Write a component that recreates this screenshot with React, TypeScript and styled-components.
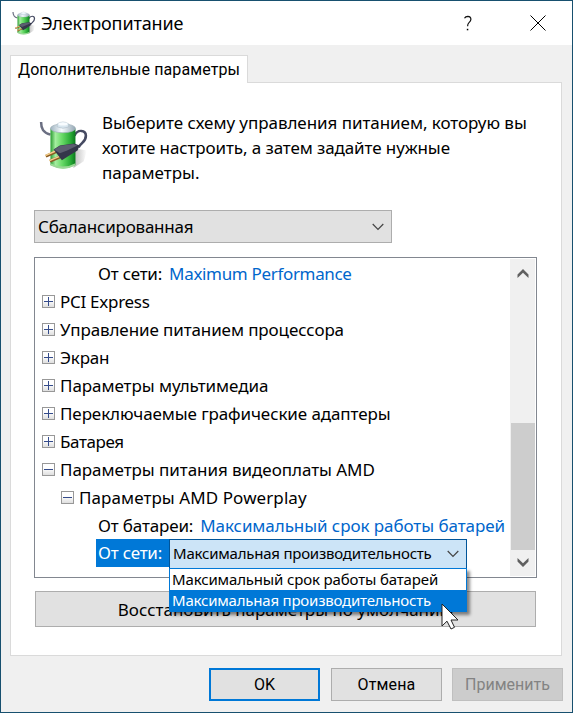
import React from "react";
import styled, { createGlobalStyle, css } from "styled-components";

const GlobalStyle = createGlobalStyle`
  * { box-sizing: border-box; }
  html, body { margin: 0; width: 573px; height: 713px; overflow: hidden; }
  body { font: 17px/25px "Noto Sans", "Open Sans", sans-serif; color: #000; cursor: default; }
  svg { display: block; flex: none; }
`;

/* Letter spacing trims each label to the dialog's text metrics. */
const Label = styled.span<{ $track?: number }>`
  letter-spacing: ${(p) => p.$track ?? 0}px;
  white-space: nowrap;
`;

const Dialog = styled.main`
  width: 573px;
  height: 713px;
  display: flex;
  flex-direction: column;
  background: #f0f0f0;
  border: 1px solid #17506f;
`;

const TitleBar = styled.header`
  height: 44px;
  flex: none;
  display: flex;
  align-items: center;
  background: #fff;
  padding: 0 26px 0 11px;
  font-size: 18px;
`;

const Title = styled.h1`
  flex: 1;
  margin: 0 0 0 5px;
  font: inherit;
  letter-spacing: -0.13px;
`;

const CaptionButtons = styled.div`
  display: flex;
  align-items: center;
  gap: 57px;
`;

const Tabs = styled.nav`
  display: flex;
  height: 28px;
  margin: 10px 0 -1px 9px;
  flex: none;
  z-index: 1;
`;

const Tab = styled.div`
  width: 238px;
  padding: 0 0 0 7px;
  background: #fff;
  border: 1px solid #dadada;
  border-bottom: 0;
  font: 16px/27px Roboto, sans-serif;
`;

const Panel = styled.section`
  margin: 0 10px 0 9px;
  height: 574px;
  flex: none;
  background: #fff;
  border: 1px solid #dadada;
  padding: 27px 24px 0 23px;
  display: flex;
  flex-direction: column;
`;

const Intro = styled.div`
  display: flex;
  gap: 13px;
  height: 75px;
  margin-left: 5px;
  flex: none;
`;

const PlanPicture = styled.div`
  padding-top: 10px;
`;

const IntroText = styled.p`
  display: flex;
  flex-direction: column;
  margin: 0;
`;

const boxed = css`
  background: #e1e1e1;
  border: 1px solid #adadad;
`;

const PlanSelect = styled.div`
  ${boxed}
  width: 358px;
  height: 33px;
  margin-top: 25px;
  padding: 0 7px 0 3px;
  flex: none;
  display: flex;
  align-items: center;
  justify-content: space-between;
`;

const TreeBox = styled.div`
  width: 503px;
  height: 321px;
  margin-top: 14px;
  border: 1px solid #828790;
  display: flex;
  flex: none;
  padding: 1px 1px 1px 0;
`;

const Tree = styled.div`
  flex: 1;
  min-width: 0;
  display: flex;
  flex-direction: column;
`;

const Row = styled.div<{ $indent: number }>`
  height: 28px;
  flex: none;
  display: flex;
  align-items: center;
  padding-left: ${(p) => p.$indent}px;
`;

const RowLabel = styled(Label)`
  margin-left: 5px;
`;

const Setting = styled(Label)`
  margin-left: 7px;
  color: #0066cc;
`;

const SelectedLabel = styled.div`
  width: 73px;
  height: 28px;
  padding-left: 2px;
  line-height: 28px;
  background: #0078d7;
  color: #fff;
`;

const ValueSelect = styled.div`
  position: relative;
  width: 298px;
  height: 30px;
  margin-top: 1px;
  padding: 0 7px 0 3px;
  display: flex;
  align-items: center;
  justify-content: space-between;
  background: #cce4f7;
  border: 1px solid #005499;
  font-size: 15px;
`;

const Dropdown = styled.div`
  position: absolute;
  z-index: 2;
  top: 28px;
  left: -1px;
  width: 298px;
  height: 44px;
  display: flex;
  flex-direction: column;
  background: #fff;
  border: 1px solid #0078d7;
  box-shadow: 3px 3px 3px rgba(0, 0, 0, 0.45);
`;

const Option = styled.div<{ $active?: boolean }>`
  flex: 1;
  padding-left: 2px;
  line-height: 21px;
  background: ${(p) => (p.$active ? "#0078d7" : "#fff")};
  color: ${(p) => (p.$active ? "#fff" : "#000")};
`;

const Pointer = styled.svg`
  position: absolute;
  z-index: 3;
  left: 271px;
  top: 63px;
`;

const ScrollBar = styled.div`
  width: 25px;
  display: flex;
  flex-direction: column;
  align-items: center;
  justify-content: space-between;
  background: #f0f0f0;
  padding: 10px 0 9px;
`;

const Thumb = styled.div`
  width: 24px;
  height: 127px;
  margin-top: auto;
  margin-bottom: 8px;
  background: #cdcdcd;
`;

const RestoreButton = styled.div`
  ${boxed}
  width: 501px;
  height: 36px;
  margin: 13px 0 0 1px;
  flex: none;
  display: flex;
  align-items: center;
  justify-content: center;
`;

const Footer = styled.footer`
  display: flex;
  justify-content: flex-end;
  gap: 11px;
  padding: 12px 9px 0 0;
`;

const FooterButton = styled.button<{ $kind?: "primary" | "disabled" }>`
  ${boxed}
  width: 111px;
  height: 33px;
  padding: 0;
  font: 16px/30px Roboto, sans-serif;
  color: #000;
  ${(p) => p.$kind === "primary" && css`border: 2px solid #0078d7;`}
  ${(p) => p.$kind === "disabled" && css`margin-left: -1px; background: #ccc; border-color: #bfbfbf; color: #838383;`}
`;

function BatteryIcon({ size }: { size: number }) {
  return (
    <svg width={size} height={size} viewBox="0 0 48 51" preserveAspectRatio="none">
      <defs>
        <linearGradient id="cell">
          <stop offset="0" stopColor="#289b30" />
          <stop offset=".2" stopColor="#a5eda0" />
          <stop offset=".45" stopColor="#6bdc69" />
          <stop offset=".8" stopColor="#29ab36" />
          <stop offset="1" stopColor="#0b7a1e" />
        </linearGradient>
        <linearGradient id="cap">
          <stop offset="0" stopColor="#9fb3c0" />
          <stop offset=".45" stopColor="#f7fcff" />
          <stop offset="1" stopColor="#93a6b3" />
        </linearGradient>
        <linearGradient id="shade">
          <stop offset="0" stopColor="#666" stopOpacity=".45" />
          <stop offset="1" stopColor="#666" stopOpacity="0" />
        </linearGradient>
      </defs>
      <path d="M33 49 L43 42 L46 31 L35 29Z" fill="url(#shade)" />
      <path d="M2 2 C2 9 4 13 11 15" fill="none" stroke="#6b6f82" strokeWidth="2.4" />
      <path d="M34 16 C37 9 45 10 45 16 C45 23 40 23 38 28" fill="none" stroke="#464a62" strokeWidth="2.5" />
      <path d="M11 9 V46 Q23 53 35 46 V9Z" fill="url(#cell)" />
      <path d="M11 44 Q23 51 35 44 V46.5 Q23 53 11 46.5Z" fill="#9bd896" />
      <ellipse cx="23" cy="8.5" rx="12" ry="4.5" fill="url(#cap)" stroke="#9aabb5" strokeWidth=".6" />
      <path d="M17.5 7 V4 Q23 0 28.5 4 V7 Q23 10 17.5 7Z" fill="#d8e6ef" stroke="#a4b4c0" strokeWidth=".5" />
      <ellipse cx="23" cy="4" rx="4.5" ry="1.6" fill="#f8fcff" />
      <path d="M6.5 37 L17 32 M10.5 42 L22 37" stroke="#8c5b22" strokeWidth="3" />
      <path d="M6 36.4 L16.5 31.4 M10 41.4 L21.5 36.4" stroke="#f3cf8d" strokeWidth="1.5" />
      <path d="M14 30 L20 26 L34 24 L39 26 L37 31 L28 37 L22 41Z" fill="#34364a" />
      <path d="M14.5 30 L20.5 26.3 L33 24.6 L37 26 L27 31 L20 34Z" fill="#5c5e70" />
    </svg>
  );
}

function Toggle({ open }: { open?: boolean }) {
  return (
    <svg width="13" height="13" viewBox="0 0 13 13" shapeRendering="crispEdges">
      <defs>
        <linearGradient id="toggle" x2="0" y2="1">
          <stop offset=".4" stopColor="#fff" />
          <stop offset="1" stopColor="#dcdcdc" />
        </linearGradient>
      </defs>
      <rect x=".5" y=".5" width="12" height="12" fill="url(#toggle)" stroke="#989898" />
      <path d={open ? "M2 6.5H11" : "M2 6.5H11M6.5 2V11"} stroke="#344b8b" />
    </svg>
  );
}

const Chevron = () => (
  <svg width="12" height="8" viewBox="0 0 12 8">
    <path d="M.7 1 L6 6.3 L11.3 1" fill="none" stroke="#444" strokeWidth="1.2" />
  </svg>
);

const ScrollArrow = ({ down }: { down?: boolean }) => (
  <svg width="12" height="9" viewBox="0 0 12 9">
    <path
      d={down ? "M.5 0 L6 5.2 L11.5 0 V3.6 L6 9 L.5 3.6Z" : "M.5 9 L6 3.8 L11.5 9 V5.4 L6 0 L.5 5.4Z"}
      fill="#606060"
    />
  </svg>
);

const groups: [string, number, boolean, number][] = [
  ["PCI Express", -0.28, false, 7],
  ["Управление питанием процессора", -0.1, false, 7],
  ["Экран", -0.2, false, 7],
  ["Параметры мультимедиа", -0.06, false, 7],
  ["Переключаемые графические адаптеры", -0.1, false, 7],
  ["Батарея", -0.38, false, 7],
  ["Параметры питания видеоплаты AMD", -0.05, true, 7],
  ["Параметры AMD Powerplay", 0.08, true, 26],
];

export default function App() {
  return (
    <>
      <GlobalStyle />
      <Dialog>
        <TitleBar>
          <BatteryIcon size={24} />
          <Title>Электропитание</Title>
          <CaptionButtons>
            <svg width="10" height="17" viewBox="0 0 10 17">
              <path d="M1.5 3.3 Q2.5 1.3 4.8 1.3 Q8 1.5 7.9 4.4 Q7.8 6 6 7.6 Q4.6 8.8 4.6 11.3" fill="none" stroke="#111" strokeWidth="1.2" />
              <path d="M3.8 13.8H5.3V15.3H3.8Z" />
            </svg>
            <svg width="16" height="16" viewBox="0 0 16 16">
              <path d="M.5 .5 L15.5 15.5 M15.5 .5 L.5 15.5" stroke="#000" strokeWidth="1" />
            </svg>
          </CaptionButtons>
        </TitleBar>
        <Tabs>
          <Tab><Label $track={0.1}>Дополнительные параметры</Label></Tab>
        </Tabs>
        <Panel>
          <Intro>
            <PlanPicture><BatteryIcon size={50} /></PlanPicture>
            <IntroText>
              <Label $track={-0.05}>Выберите схему управления питанием, которую вы</Label>
              <Label $track={-0.1}>хотите настроить, а затем задайте нужные</Label>
              <Label>параметры.</Label>
            </IntroText>
          </Intro>
          <PlanSelect>
            <Label $track={-0.22}>Сбалансированная</Label>
            <Chevron />
          </PlanSelect>
          <TreeBox>
            <Tree>
              <Row $indent={63}>
                <Label $track={-0.2}>От сети:</Label>
                <Setting $track={-0.33}>Maximum Performance</Setting>
              </Row>
              {groups.map(([name, track, open, indent]) => (
                <Row key={name} $indent={indent}>
                  <Toggle open={open} />
                  <RowLabel $track={track}>{name}</RowLabel>
                </Row>
              ))}
              <Row $indent={63}>
                <Label $track={-0.15}>От батареи:</Label>
                <Setting $track={-0.07}>Максимальный срок работы батарей</Setting>
              </Row>
              <Row $indent={61}>
                <SelectedLabel><Label $track={-0.2}>От сети:</Label></SelectedLabel>
                <ValueSelect>
                  <Label $track={-0.22}>Максимальная производительность</Label>
                  <Chevron />
                  <Dropdown>
                    <Option><Label $track={-0.15}>Максимальный срок работы батарей</Label></Option>
                    <Option $active><Label $track={-0.21}>Максимальная производительность</Label></Option>
                  </Dropdown>
                  <Pointer width="19" height="28" viewBox="0 0 19 28">
                    <path d="M1 1 V23 L6 18.2 L10 26 L13.5 24.3 L10 17 H17Z" fill="#fff" stroke="#222" strokeWidth="1" />
                  </Pointer>
                </ValueSelect>
              </Row>
            </Tree>
            <ScrollBar>
              <ScrollArrow />
              <Thumb />
              <ScrollArrow down />
            </ScrollBar>
          </TreeBox>
          <RestoreButton><Label>Восстановить параметры по умолчанию</Label></RestoreButton>
        </Panel>
        <Footer>
          <FooterButton $kind="primary">OK</FooterButton>
          <FooterButton><Label $track={0.15}>Отмена</Label></FooterButton>
          <FooterButton $kind="disabled" disabled><Label>Применить</Label></FooterButton>
        </Footer>
      </Dialog>
    </>
  );
}
